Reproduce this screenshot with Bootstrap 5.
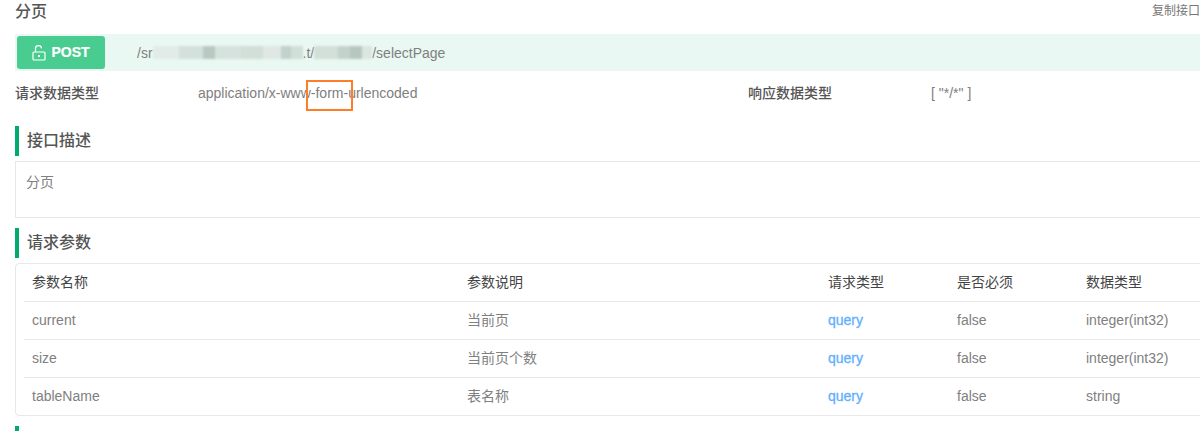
<!DOCTYPE html>
<html lang="en">
<head>
  <meta charset="UTF-8">
  <title>分页</title>
  <link href="https://cdn.jsdelivr.net/npm/bootstrap@5.3.3/dist/css/bootstrap.min.css" rel="stylesheet">
  <style>
    html, body { overflow: hidden; height: 431px; }
    body { font-family: "Liberation Sans", "Noto Sans CJK SC", sans-serif; font-size: 14px; color: #555; background: #fff; }
    .api-page { width: 1230px; padding-left: 15px; height: 431px; overflow: hidden; position: relative; }
    .api-title { height: 34px; width: 1185px; padding-top: 1px; }
    .api-title b { font-size: 16px; line-height: 22px; font-weight: 500; color: #555; }
    .api-copy { font-size: 12px; line-height: 20px; color: #777; }
    .post-bar { height: 37px; width: 1215px; background: #e9f8f2; padding-left: 2px; }
    .post-btn { width: 88px; height: 33px; background: #49cc90; color: #fff; font-size: 14px; font-weight: 700; border-radius: 3px; gap: 5px; -webkit-text-stroke: .2px #fff; }
    .post-path { margin-left: 32px; color: #808080; line-height: 18px; }
    .blur-run { height: 18px; filter: blur(1.2px); align-items: center; }
    .blur-run i { display: block; height: 13px; }
    .media-row { height: 47px; line-height: 20px; padding-top: 12px; }
    .media-key { font-weight: 500; flex: 0 0 183px; color: #555; font-size: 14px; }
    .media-val { flex: 0 0 550px; color: #808080; }
    .sect-head { height: 30px; border-left: 4px solid #00ab6d; padding-left: 8px; font-size: 16px; font-weight: 500; line-height: 30px; color: #555; }
    .desc-box { height: 57px; margin-top: 5px; margin-bottom: 10px; border: 1px solid #e8e8e8; padding: 10px; line-height: 20px; color: #808080; font-size: 14px; }
    .param-box { height: 153px; margin-top: 5px; border: 1px solid #e8e8e8; border-radius: 4px; padding-left: 8px; }
    .param-table { table-layout: fixed; width: 1220px; margin: 0; }
    .param-table th, .param-table td { height: 38px; padding: 0 8px; vertical-align: middle; border-bottom: 1px solid #e8e8e8; font-weight: 400; font-size: 14px; background: transparent; color: #808080; box-shadow: none; }
    .param-table th { height: 37px; color: #444; }
    .param-table tr:last-child td { border-bottom: 0; }
    .param-table .q-type { color: #61affe; -webkit-text-stroke: .3px #61affe; }
    .next-head { width: 4px; height: 5px; margin-top: 10px; background: #00ab6d; }
    .mark-box { position: absolute; left: 306px; top: 80px; width: 47px; height: 31px; border: 2px solid #ff7d26; }
  </style>
</head>
<body>
  <div class="api-page">
    <div class="api-title d-flex justify-content-between">
      <b>分页</b>
      <span class="api-copy">复制接口</span>
    </div>

    <div class="post-bar d-flex align-items-center">
      <div class="post-btn d-flex align-items-center justify-content-center">
        <svg width="14" height="16" viewBox="0 0 14 16" fill="none" stroke="#fff" stroke-width="1.2">
          <rect x="1" y="7" width="12" height="8" rx="1"/>
          <path d="M3.5 7V4a3 3 0 0 1 6-.6"/>
          <rect x="6" y="10" width="2" height="2" fill="#fff" stroke="none"/>
        </svg>
        <span>POST</span>
      </div>
      <div class="post-path d-flex align-items-center">
        <span>/sr</span>
        <span class="blur-run d-flex">
          <i style="width:26px;background:#e2ebe7"></i><i style="width:24px;background:#d4e0db"></i><i style="width:12px;background:#b9c9c2"></i><i style="width:26px;background:#d6e2dd"></i><i style="width:22px;background:#d2ded8"></i><i style="width:18px;background:#dfe8e4"></i><i style="width:10px;background:#c2d1cb"></i><i style="width:12px;background:#d2dfd9"></i>
        </span>
        <span>.t/</span>
        <span class="blur-run d-flex">
          <i style="width:24px;background:#d3e0da"></i><i style="width:12px;background:#c3d2cb"></i><i style="width:12px;background:#b7c7c0"></i><i style="width:10px;background:#dbe6e1"></i>
        </span>
        <span>/selectPage</span>
      </div>
    </div>

    <div class="media-row d-flex">
      <div class="media-key">请求数据类型</div>
      <div class="media-val">application/x-www-form-urlencoded</div>
      <div class="media-key">响应数据类型</div>
      <div class="media-val">[ "*/*" ]</div>
    </div>

    <div class="sect-head mt-2">接口描述</div>
    <div class="desc-box">分页</div>

    <div class="sect-head">请求参数</div>
    <div class="param-box">
      <table class="table param-table">
        <colgroup>
          <col style="width:435px"><col style="width:361px"><col style="width:129px"><col style="width:129px"><col>
        </colgroup>
        <thead>
          <tr><th>参数名称</th><th>参数说明</th><th>请求类型</th><th>是否必须</th><th>数据类型</th></tr>
        </thead>
        <tbody>
          <tr><td>current</td><td>当前页</td><td class="q-type">query</td><td>false</td><td>integer(int32)</td></tr>
          <tr><td>size</td><td>当前页个数</td><td class="q-type">query</td><td>false</td><td>integer(int32)</td></tr>
          <tr><td>tableName</td><td>表名称</td><td class="q-type">query</td><td>false</td><td>string</td></tr>
        </tbody>
      </table>
    </div>
    <div class="next-head"></div>

    <div class="mark-box"></div>
  </div>
  <script src="https://cdn.jsdelivr.net/npm/bootstrap@5.3.3/dist/js/bootstrap.bundle.min.js"></script>
</body>
</html>
